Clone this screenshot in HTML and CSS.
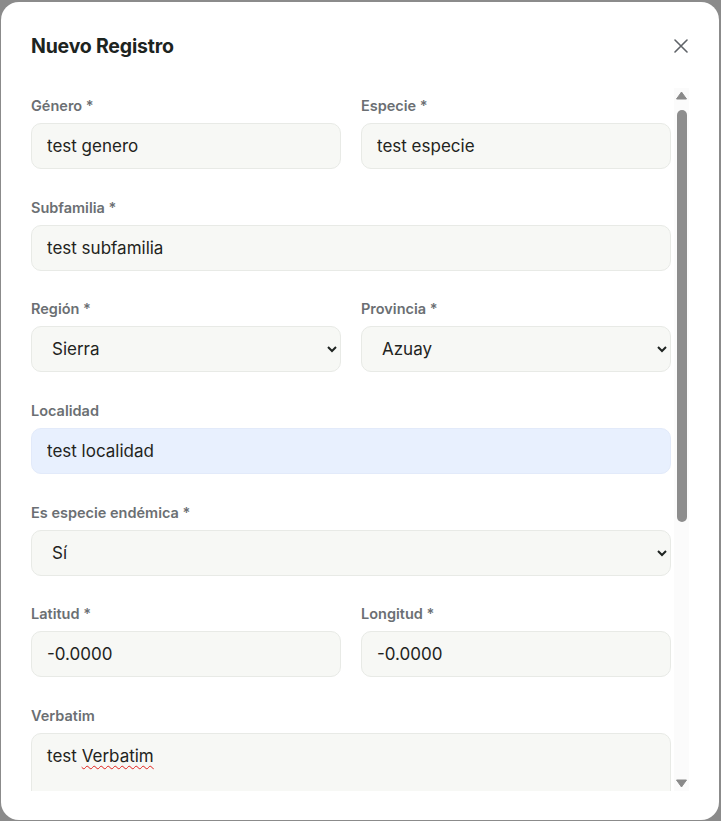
FILE: index.html
```html
<!DOCTYPE html>
<html lang="es">
<head>
<meta charset="utf-8">
<title>Nuevo Registro</title>
<link rel="stylesheet" href="styles.css">
</head>
<body>
<div class="modal">
  <div class="modal-header">
    <h2 class="modal-title">Nuevo Registro</h2>
    <button class="close-btn" type="button" aria-label="Cerrar">
      <svg width="14" height="14" viewBox="0 0 14 14"><path d="M1 1 L13 13 M13 1 L1 13" stroke="#5f6368" stroke-width="1.6" stroke-linecap="round" fill="none"/></svg>
    </button>
  </div>
  <div class="scroll-area">
    <form class="form-content">
      <div class="row two">
        <div class="field">
          <label class="label">Género *</label>
          <input class="control" type="text" value="test genero">
        </div>
        <div class="field">
          <label class="label">Especie *</label>
          <input class="control" type="text" value="test especie">
        </div>
      </div>
      <div class="row">
        <div class="field">
          <label class="label">Subfamilia *</label>
          <input class="control" type="text" value="test subfamilia">
        </div>
      </div>
      <div class="row two">
        <div class="field">
          <label class="label">Región *</label>
          <select class="control select"><option>Sierra</option></select>
        </div>
        <div class="field">
          <label class="label">Provincia *</label>
          <select class="control select"><option>Azuay</option></select>
        </div>
      </div>
      <div class="row">
        <div class="field">
          <label class="label">Localidad</label>
          <input class="control autofill" type="text" value="test localidad">
        </div>
      </div>
      <div class="row">
        <div class="field">
          <label class="label">Es especie endémica *</label>
          <select class="control select"><option>Sí</option></select>
        </div>
      </div>
      <div class="row two">
        <div class="field">
          <label class="label">Latitud *</label>
          <input class="control" type="text" value="-0.0000">
        </div>
        <div class="field">
          <label class="label">Longitud *</label>
          <input class="control" type="text" value="-0.0000">
        </div>
      </div>
      <div class="row">
        <div class="field">
          <label class="label">Verbatim</label>
          <div class="control textarea" role="textbox">test <span class="misspelled">Verbatim</span></div>
        </div>
      </div>
    </form>
    <div class="scrollbar">
      <div class="sb-btn">
        <svg width="11" height="9" viewBox="0 0 11 9"><path d="M5.5 1 L10.5 8 L0.5 8 Z" fill="#8a8a8a" stroke="#8a8a8a" stroke-linejoin="round"/></svg>
      </div>
      <div class="sb-track"><div class="sb-thumb"></div></div>
      <div class="sb-btn">
        <svg width="11" height="9" viewBox="0 0 11 9"><path d="M0.5 1 L10.5 1 L5.5 8 Z" fill="#8a8a8a" stroke="#8a8a8a" stroke-linejoin="round"/></svg>
      </div>
    </div>
  </div>
</div>
</body>
</html>
```
FILE: styles.css
```css
* { box-sizing: border-box; }
html, body {
  margin: 0;
  height: 821px;
  overflow: hidden;
}
body {
  background: #8b8b8b;
  font-family: Inter, "Noto Sans", "Liberation Sans", sans-serif;
  padding-top: 2px;
  padding-left: 1px;
}
.modal {
  width: 718px;
  height: 818px;
  background: #ffffff;
  border-radius: 18px;
  padding: 30px 30px 29px 30px;
  display: flex;
  flex-direction: column;
}
.modal-header {
  height: 28px;
  display: flex;
  align-items: center;
  justify-content: space-between;
  margin-bottom: 28px;
}
.modal-title {
  margin: 0;
  font-size: 19.5px;
  line-height: 30px;
  font-weight: 700;
  color: #1d241f;
  letter-spacing: -0.2px;
}
.close-btn {
  border: 0;
  background: transparent;
  padding: 0;
  width: 14px;
  height: 14px;
  margin-right: 1px;
  display: flex;
}
.scroll-area {
  height: 703px;
  display: grid;
  grid-template-columns: 1fr 15px;
  column-gap: 3px;
}
.form-content {
  overflow: hidden;
  padding-top: 8px;
  margin: 0;
}
.row {
  display: grid;
  grid-template-columns: 1fr;
  column-gap: 20px;
  margin-bottom: 28.67px;
}
.row.two { grid-template-columns: 1fr 1fr; }
.field { display: flex; flex-direction: column; }
.label {
  font-size: 14.5px;
  line-height: 20px;
  font-weight: 600;
  color: #6b6f73;
  margin-bottom: 7px;
}
.control {
  height: 46px;
  width: 100%;
  border: 1px solid #e8eae6;
  background: #f7f8f5;
  border-radius: 10px;
  padding: 0 15px;
  font-family: inherit;
  font-size: 17px;
  color: #1f2421;
  outline: none;
}
.select { padding-left: 16px; padding-right: 11px; }
.autofill { background: #e8f0fe; border-color: #e2eafa; }
.textarea {
  height: 90px;
  padding-top: 11px;
  line-height: 22px;
}
.misspelled {
  text-decoration: underline wavy #e0201c;
  text-decoration-thickness: 1px;
  text-underline-offset: 3px;
}
.scrollbar {
  display: flex;
  flex-direction: column;
  background: #fbfbfb;
}
.sb-btn {
  height: 15px;
  display: flex;
  align-items: center;
  justify-content: center;
}
.sb-track {
  flex: 1;
  display: flex;
  flex-direction: column;
  align-items: center;
}
.sb-thumb {
  margin-top: 7px;
  width: 10px;
  height: 412px;
  background: #8d8d8d;
  border-radius: 5px;
}
```
